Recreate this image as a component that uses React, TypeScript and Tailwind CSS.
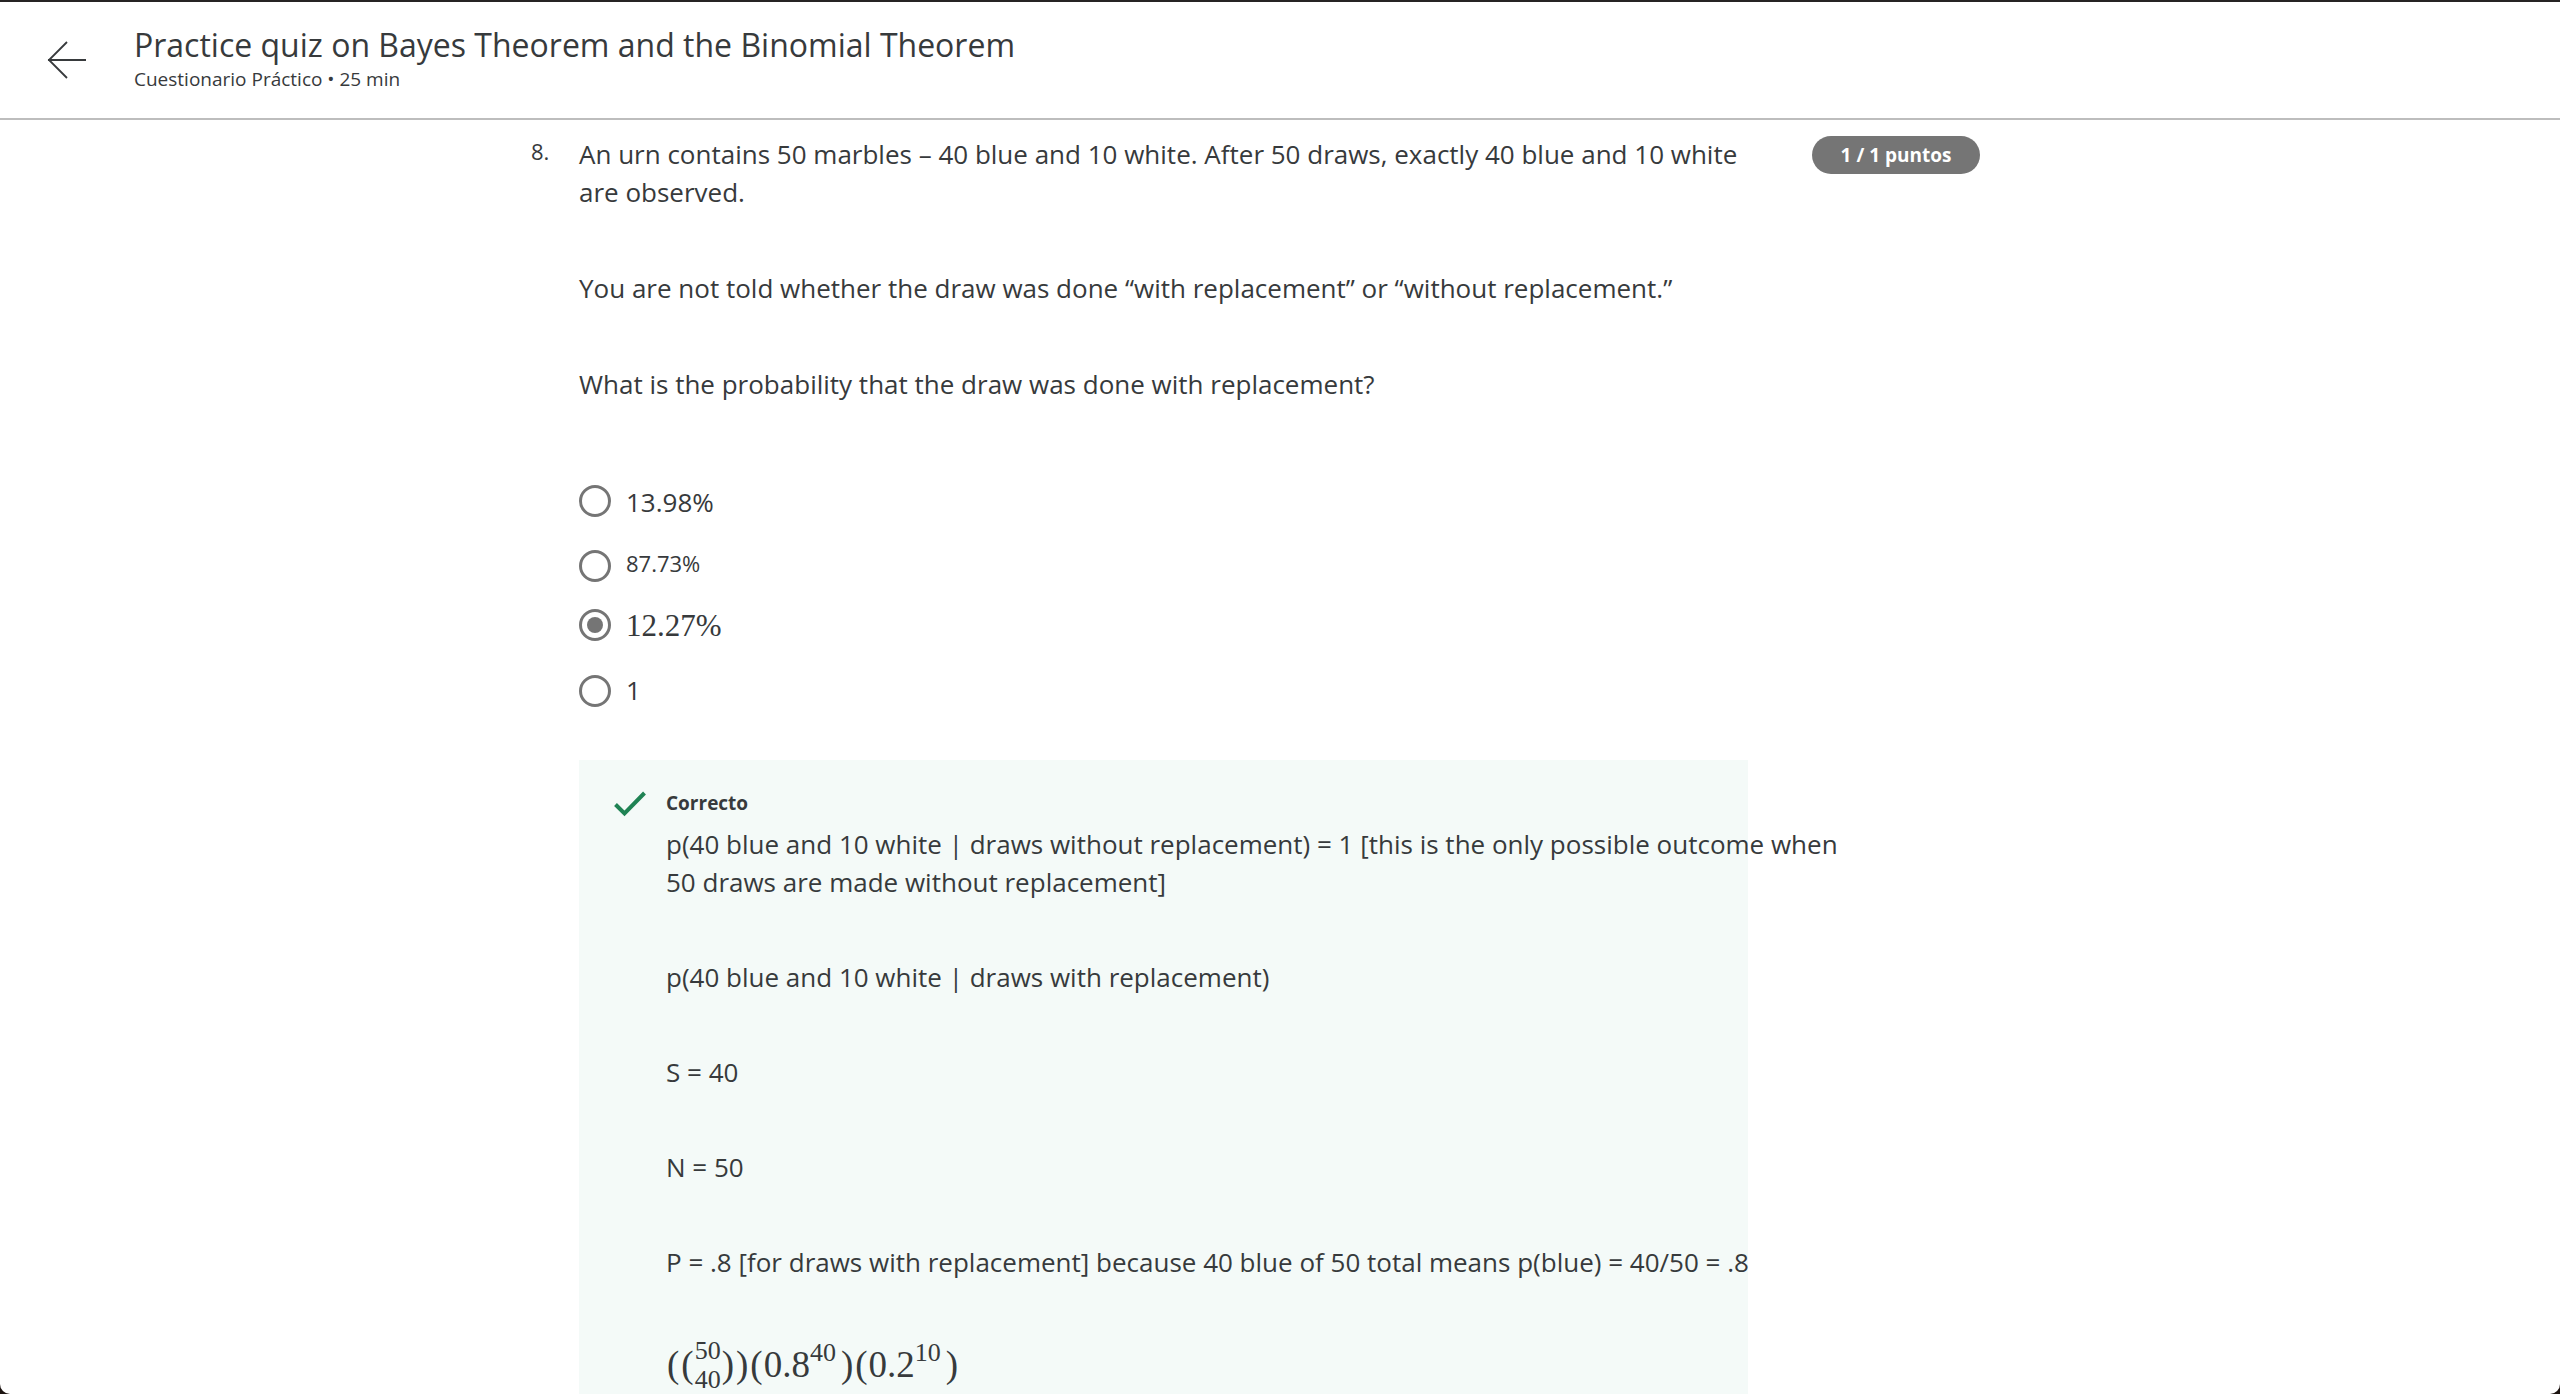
import type { ReactNode } from 'react';

type Option = { id: string; label: string; row: string; text: string; checked?: boolean };

const options: Option[] = [
  { id: 'a', label: '13.98%', row: 'h-[66px]', text: 'text-[26px] leading-[38px] pt-[2px]' },
  { id: 'b', label: '87.73%', row: 'h-16', text: 'text-[22px] leading-[34px] pb-[6px]' },
  {
    id: 'c',
    label: '12.27%',
    row: 'h-[54px]',
    text: "text-[31px] leading-[38px] pt-[2px] font-['Liberation_Serif',serif]",
    checked: true,
  },
  { id: 'd', label: '1', row: 'h-[78px]', text: 'text-[26px] leading-[38px] pb-[2px]' },
];

const explanation = [
  'p(40 blue and 10 white | draws without replacement) = 1 [this is the only possible outcome when 50 draws are made without replacement]',
  'p(40 blue and 10 white | draws with replacement)',
  'S = 40',
  'N = 50',
  'P = .8 [for draws with replacement] because 40 blue of 50 total means p(blue) = 40/50 = .8',
];

function Paren({ children }: { children: ReactNode }) {
  return <span className="px-px">{children}</span>;
}

function Power({ base, exponent }: { base: string; exponent: string }) {
  return (
    <>
      <Paren>(</Paren>
      <span>{base}</span>
      <span className="self-start text-[26px] leading-[30px]">{exponent}</span>
      <span className="w-1" />
      <Paren>)</Paren>
    </>
  );
}

function Formula() {
  return (
    <div className="flex h-[54px] items-center font-['Liberation_Serif',serif] text-[37px] leading-[44px]">
      <Paren>(</Paren>
      <Paren>(</Paren>
      <span className="flex flex-col text-[26px] leading-[29px]">
        <span>50</span>
        <span>40</span>
      </span>
      <Paren>)</Paren>
      <Paren>)</Paren>
      <Power base="0.8" exponent="40" />
      <Power base="0.2" exponent="10" />
    </div>
  );
}

export default function App() {
  return (
    <div className="h-screen overflow-hidden bg-[#1c1310]">
      <div className="flex h-full flex-col overflow-hidden rounded-b-[10px] bg-white font-['Open_Sans',sans-serif] text-[#373a3c]">
        <header className="flex h-[120px] shrink-0 items-center border-t-2 border-b-2 border-t-[#262424] border-b-[#bdbdbd] pl-[46px]">
          <button type="button" aria-label="Volver" className="mr-[48px]">
            <svg width="40" height="40" viewBox="0 0 40 40" fill="none" stroke="#373a3c" className="block">
              <path d="M40 20H2" strokeWidth="2" />
              <path d="M21 2L3 20l18 18" strokeWidth="1.8" />
            </svg>
          </button>
          <div className="pb-[6px]">
            <h1 className="text-[32px] leading-[44px]">Practice quiz on Bayes Theorem and the Binomial Theorem</h1>
            <p className="text-[19px] leading-[24px]">Cuestionario Práctico • 25 min</p>
          </div>
        </header>

        <main className="mx-auto flex w-full max-w-[1498px] items-start">
          <span className="w-12 shrink-0 pt-[15px] text-[22px] leading-[32px]">8.</span>
          <section className="w-[1169px] shrink-0 pt-[15px]">
            <div className="flex flex-col gap-[58px] text-[26px] leading-[38px]">
              <p>
                An urn contains 50 marbles – 40 blue and 10 white. After 50 draws, exactly 40 blue and 10 white are
                observed.
              </p>
              <p>You are not told whether the draw was done “with replacement” or “without replacement.”</p>
              <p>What is the probability that the draw was done with replacement?</p>
            </div>

            <fieldset className="mt-[65px]">
              {options.map((o) => (
                <div key={o.id} className={`flex items-center ${o.row}`}>
                  <input
                    type="radio"
                    id={`option-${o.id}`}
                    name="answer"
                    defaultChecked={o.checked}
                    className="mr-[15px] grid size-8 shrink-0 appearance-none place-content-center rounded-full border-3 border-[#757575] before:size-4 before:rounded-full checked:before:bg-[#757575]"
                  />
                  <label htmlFor={`option-${o.id}`} className={o.text}>
                    {o.label}
                  </label>
                </div>
              ))}
            </fieldset>

            <div className="mt-[30px] flex items-start bg-[#f4faf8] pt-[27px] pb-16 pl-[35px]">
              <svg width="32" height="26" viewBox="0 0 32 26" fill="none" stroke="#1f8354" className="mt-1 shrink-0">
                <path d="M1.5 13.5l9 9L30.5 2" strokeWidth="4" />
              </svg>
              <div className="ml-5 w-[1190px] shrink-0">
                <h2 className="text-[19px] leading-[32px] font-bold">Correcto</h2>
                <div className="mt-[6px] flex flex-col gap-[57px] text-[26px] leading-[38px]">
                  {explanation.map((line) => (
                    <p key={line}>{line}</p>
                  ))}
                  <Formula />
                </div>
              </div>
            </div>
          </section>
          <span className="mt-4 ml-16 flex h-[38px] w-[168px] shrink-0 items-center justify-center rounded-full bg-[#757575] text-[19px] leading-[24px] font-bold text-white">
            1 / 1 puntos
          </span>
        </main>
      </div>
    </div>
  );
}
